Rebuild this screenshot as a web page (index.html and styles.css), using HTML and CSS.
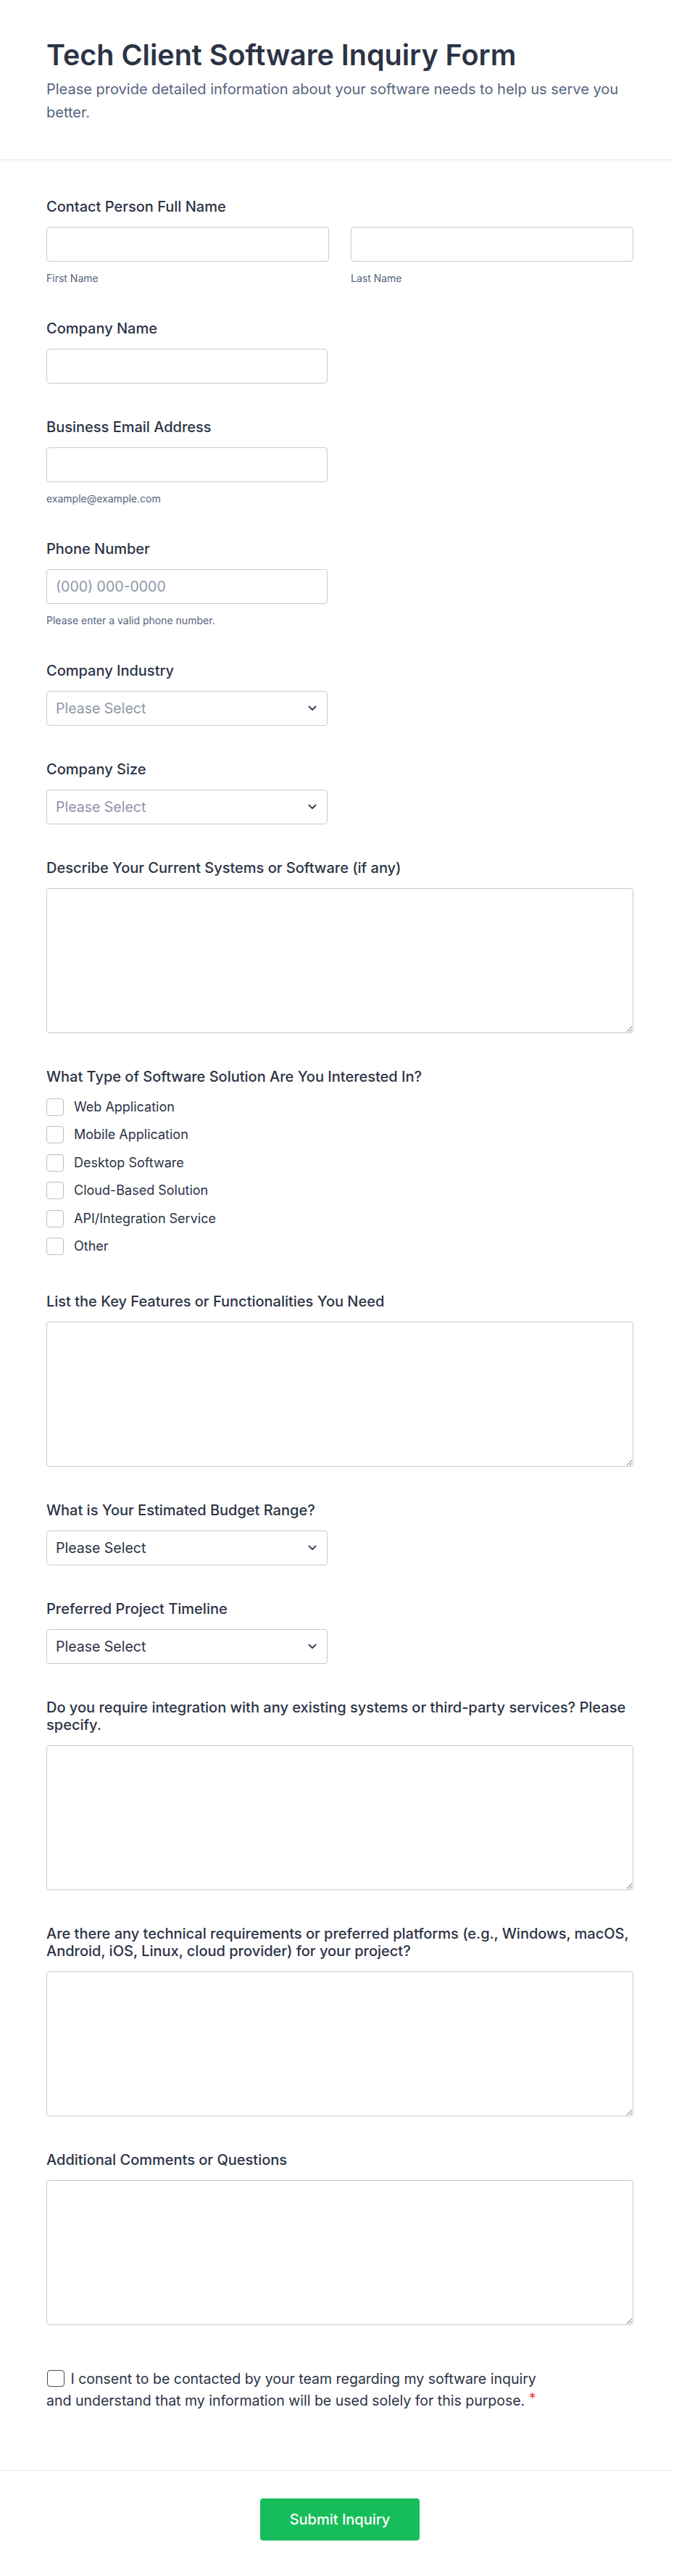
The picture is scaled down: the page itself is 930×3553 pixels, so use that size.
FILE: index.html
```html
<!DOCTYPE html>
<html lang="en">
<head>
<meta charset="utf-8">
<title>Tech Client Software Inquiry Form</title>
<link rel="stylesheet" href="styles.css">
</head>
<body>
<form class="form">
  <header class="header">
    <h1 class="title">Tech Client Software Inquiry Form</h1>
    <p class="subtitle">Please provide detailed information about your software needs to help us serve you better.</p>
  </header>

  <div class="fields">
    <div class="field">
      <label class="label">Contact Person Full Name</label>
      <div class="name-row">
        <div class="name-col">
          <input class="input full" type="text">
          <span class="sublabel">First Name</span>
        </div>
        <div class="name-col">
          <input class="input full" type="text">
          <span class="sublabel">Last Name</span>
        </div>
      </div>
    </div>

    <div class="field">
      <label class="label">Company Name</label>
      <input class="input half" type="text">
    </div>

    <div class="field">
      <label class="label">Business Email Address</label>
      <input class="input half" type="email">
      <span class="sublabel">example@example.com</span>
    </div>

    <div class="field">
      <label class="label">Phone Number</label>
      <input class="input half" type="tel" placeholder="(000) 000-0000">
      <span class="sublabel">Please enter a valid phone number.</span>
    </div>

    <div class="field">
      <label class="label">Company Industry</label>
      <div class="select-wrap">
        <select class="input select muted"><option>Please Select</option></select>
        <svg class="chevron" width="12" height="8" viewBox="0 0 12 8"><path d="M1.5 1.5 L6 6 L10.5 1.5" fill="none" stroke="#3b4458" stroke-width="2" stroke-linecap="round" stroke-linejoin="round"/></svg>
      </div>
    </div>

    <div class="field">
      <label class="label">Company Size</label>
      <div class="select-wrap">
        <select class="input select muted"><option>Please Select</option></select>
        <svg class="chevron" width="12" height="8" viewBox="0 0 12 8"><path d="M1.5 1.5 L6 6 L10.5 1.5" fill="none" stroke="#3b4458" stroke-width="2" stroke-linecap="round" stroke-linejoin="round"/></svg>
      </div>
    </div>

    <div class="field">
      <label class="label">Describe Your Current Systems or Software (if any)</label>
      <textarea class="input textarea"></textarea>
    </div>

    <div class="field">
      <label class="label">What Type of Software Solution Are You Interested In?</label>
      <div class="checks">
        <label class="check"><span class="box"></span>Web Application</label>
        <label class="check"><span class="box"></span>Mobile Application</label>
        <label class="check"><span class="box"></span>Desktop Software</label>
        <label class="check"><span class="box"></span>Cloud-Based Solution</label>
        <label class="check"><span class="box"></span>API/Integration Service</label>
        <label class="check"><span class="box"></span>Other</label>
      </div>
    </div>

    <div class="field">
      <label class="label">List the Key Features or Functionalities You Need</label>
      <textarea class="input textarea"></textarea>
    </div>

    <div class="field">
      <label class="label">What is Your Estimated Budget Range?</label>
      <div class="select-wrap">
        <select class="input select"><option>Please Select</option></select>
        <svg class="chevron" width="12" height="8" viewBox="0 0 12 8"><path d="M1.5 1.5 L6 6 L10.5 1.5" fill="none" stroke="#3b4458" stroke-width="2" stroke-linecap="round" stroke-linejoin="round"/></svg>
      </div>
    </div>

    <div class="field">
      <label class="label">Preferred Project Timeline</label>
      <div class="select-wrap">
        <select class="input select"><option>Please Select</option></select>
        <svg class="chevron" width="12" height="8" viewBox="0 0 12 8"><path d="M1.5 1.5 L6 6 L10.5 1.5" fill="none" stroke="#3b4458" stroke-width="2" stroke-linecap="round" stroke-linejoin="round"/></svg>
      </div>
    </div>

    <div class="field">
      <label class="label">Do you require integration with any existing systems or third-party services? Please specify.</label>
      <textarea class="input textarea"></textarea>
    </div>

    <div class="field">
      <label class="label">Are there any technical requirements or preferred platforms (e.g., Windows, macOS, Android, iOS, Linux, cloud provider) for your project?</label>
      <textarea class="input textarea"></textarea>
    </div>

    <div class="field">
      <label class="label">Additional Comments or Questions</label>
      <textarea class="input textarea"></textarea>
    </div>

    <div class="consent">
      <label class="consent-text"><span class="consent-box"></span> I consent to be contacted by your team regarding my software inquiry and understand that my information will be used solely for this purpose. <span class="req">*</span></label>
    </div>
  </div>

  <footer class="footer">
    <button class="submit" type="button">Submit Inquiry</button>
  </footer>
</form>
</body>
</html>
```

FILE: styles.css
```css
* {
  box-sizing: border-box;
}

html,
body {
  margin: 0;
  padding: 0;
  background: #ffffff;
}

body {
  font-family: Inter, "Noto Sans", "Liberation Sans", sans-serif;
  color: #2c3345;
}

.form {
  width: 930px;
  margin: 0;
}

.header {
  padding: 52px 56px 49px 64px;
  border-bottom: 1px solid #e3e5ee;
}

.title {
  margin: 0;
  font-size: 39.5px;
  line-height: 48px;
  font-weight: 600;
  color: #2c3345;
}

.subtitle {
  margin: 7px 0 0;
  font-size: 20px;
  line-height: 32px;
  color: #57647e;
}

.fields {
  padding: 52px 56px 82px 64px;
  display: flex;
  flex-direction: column;
  gap: 48px;
}

.field {
  display: flex;
  flex-direction: column;
  align-items: flex-start;
}

.label {
  display: block;
  font-size: 20px;
  line-height: 24px;
  font-weight: 500;
  margin-bottom: 16px;
  color: #2c3345;
}

.input {
  display: block;
  height: 48px;
  border: 1px solid #c3cad8;
  border-radius: 4px;
  padding: 0 12px;
  font-family: inherit;
  font-size: 19.5px;
  color: #2c3345;
  background: #ffffff;
  margin: 0;
}

.input::placeholder {
  color: #8e96a8;
}

.full {
  width: 100%;
}

.half {
  width: 388px;
}

.name-row {
  display: grid;
  grid-template-columns: 1fr 1fr;
  gap: 30px;
  width: 100%;
}

.name-col {
  display: flex;
  flex-direction: column;
}

.sublabel {
  display: block;
  margin-top: 14px;
  font-size: 14px;
  line-height: 18px;
  color: #57647e;
}

.select-wrap {
  position: relative;
  width: 388px;
}

.select {
  width: 100%;
  appearance: none;
  -webkit-appearance: none;
  padding-right: 36px;
}

.select.muted {
  color: #8e96a8;
}

.chevron {
  position: absolute;
  right: 15px;
  top: 20px;
  pointer-events: none;
}

.textarea {
  width: 100%;
  height: 200px;
  padding: 10px 12px;
}

.checks {
  display: flex;
  flex-direction: column;
  gap: 14.4px;
  padding-top: 2px;
  padding-bottom: 4px;
}

.check {
  display: flex;
  align-items: center;
  gap: 14px;
  height: 24px;
  font-size: 18px;
  line-height: 24px;
  color: #2c3345;
}

.box {
  width: 24px;
  height: 24px;
  border: 1px solid #b9c0cd;
  border-radius: 4px;
  background: #ffffff;
  flex: none;
}

.consent {
  margin-top: 13px;
}

.consent-text {
  display: block;
  width: 700px;
  font-size: 19.5px;
  line-height: 27px;
  color: #2c3345;
}

.consent-box {
  display: inline-block;
  width: 24px;
  height: 23px;
  border: 1.5px solid #434a5a;
  border-radius: 4px;
  vertical-align: middle;
  margin: -4px 3px 0 1px;
}

.req {
  color: #f23a3c;
  vertical-align: 3px;
}

.footer {
  border-top: 1px solid #e3e5ee;
  padding: 38px 56px 50px 64px;
  display: flex;
  justify-content: center;
}

.submit {
  width: 220px;
  height: 58px;
  border: none;
  border-radius: 4px;
  background: #18bd5b;
  color: #ffffff;
  font-family: inherit;
  font-size: 20px;
  font-weight: 500;
}
```
